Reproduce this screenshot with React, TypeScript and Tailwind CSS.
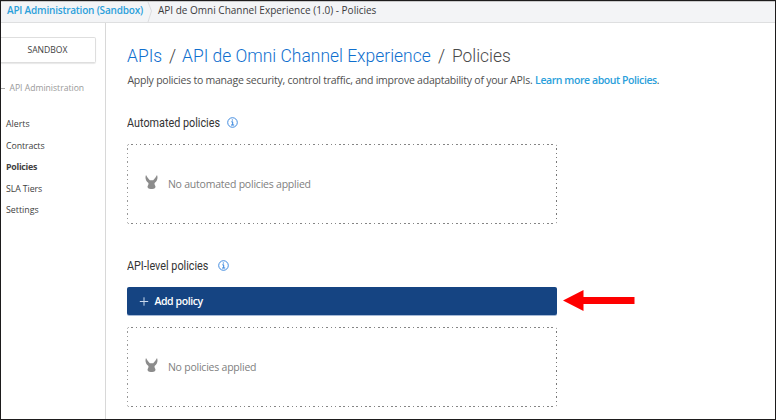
import React from 'react';

const din = "font-['Roboto','Liberation_Sans',sans-serif]";

function InfoIcon() {
  return (
    <svg className="-mt-[2px] h-[11px] w-[11px] shrink-0" viewBox="0 0 11 11" fill="none" stroke="#2f80dc">
      <circle cx="5.5" cy="5.5" r="4.8" strokeWidth="0.9" />
      <path d="M4.300 4.800h1.400v3.100M4 8h3.200M4.800 3h1.200" strokeWidth="1" />
    </svg>
  );
}

function MuleIcon() {
  return (
    <svg className="-mt-[2px] h-[14px] w-[13px] shrink-0" viewBox="0 0 13 14" fill="#8c8c8c">
      <path d="M1 0C-.2 3 .8 6 3.200 7.800c.6 1 .2 2-.4 2.900-.5.9-.3 1.900.4 2.500 1.300 1.100 5.300 1.100 6.600 0 .7-.6.9-1.600.4-2.500-.6-.9-1-1.900-.4-2.900C12.200 6 13.200 3 12 0 11 2 9.800 3.700 8.200 5.300c-.9-.2-2.500-.2-3.400 0C3.200 3.700 2 2 1 0Z" />
    </svg>
  );
}

function EmptyBox({ text }: { text: string }) {
  return (
    <div className="flex h-20 w-[430px] items-center rounded-[3px] bg-[repeating-linear-gradient(90deg,#858585_0_1.5px,transparent_1.5px_4.33px),repeating-linear-gradient(90deg,#858585_0_1.5px,transparent_1.5px_4.33px),repeating-linear-gradient(180deg,#999_0_1.5px,transparent_1.5px_4.33px),repeating-linear-gradient(180deg,#777_0_1.5px,transparent_1.5px_4.33px)] bg-[length:100%_1px,100%_1px,1px_100%,1px_100%] bg-[position:0_0,0_100%,0_0,100%_0] bg-no-repeat pl-[18px]">
      <div className="-mt-[3px] flex items-center">
        <MuleIcon />
        <span className="ml-[9.500px] mt-[2px] text-[10.5px] font-medium leading-4 tracking-[-0.22px] text-[#808080]">{text}</span>
      </div>
    </div>
  );
}

function SectionTitle({ text, width }: { text: string; width: string }) {
  return (
    <div className="flex h-5 items-center">
      <h2 className={`${din} ${width} origin-left scale-x-[0.865] whitespace-nowrap text-[12.5px] leading-5 text-[#333]`}>{text}</h2>
      <InfoIcon />
    </div>
  );
}

export default function App() {
  return (
    <div className="flex h-[420px] w-[776px] flex-col overflow-hidden border border-[#1d1b1c] bg-white font-['Open_Sans','Noto_Sans',sans-serif]">
      <header className="flex h-[22px] shrink-0 items-center whitespace-nowrap border-b border-t border-b-[#dedfe0] border-t-[#c9c9ca] bg-[#f3f4f6] pl-[6px] text-[10px]">
        <a className="-mt-1 w-[137px] font-semibold leading-4 tracking-[-0.2px] text-[#2ba0db]">API Administration (Sandbox)</a>
        <svg className="h-5 w-[14px]" viewBox="0 0 14 20" fill="none" stroke="#dcdde0"><path d="M4 0 7.500 9 4 20" /></svg>
        <span className="-mt-1 leading-4 text-[#3b3b3d]">API de Omni Channel Experience (1.0) - Policies</span>
      </header>
      <div className="flex min-h-0 flex-1">
        <aside className="w-[105px] shrink-0 border-r border-[#d8d8d8] text-[8.8px] text-[#414141]">
          <div className="mt-[14px] flex h-[26px] w-[95px] items-center justify-center rounded-r-[2px] border border-l-0 border-[#dedede] pr-[1px] text-[8.6px] shadow-[0_1px_1px_#e8e8e8]">SANDBOX</div>
          <div className="mt-[17px] flex h-[17px] items-center whitespace-nowrap text-[8.6px] text-[#999]">
            <span className="mr-[4.500px] h-px w-[4px] bg-[#aaa]" />API Administration
          </div>
          <nav className="mt-[17px] pl-[5px]">
            <div className="flex h-[21.500px] items-center">Alerts</div>
            <div className="flex h-[21.500px] items-center tracking-[-0.1px]">Contracts</div>
            <div className="flex h-[21.500px] items-center font-bold tracking-[-0.25px]">Policies</div>
            <div className="flex h-[21.500px] items-center tracking-[-0.1px]">SLA Tiers</div>
            <div className="flex h-[21.500px] items-center">Settings</div>
          </nav>
        </aside>
        <main className="flex min-w-0 flex-1 flex-col pl-[21.400px] pt-[20px]">
          <h1 className={`${din} flex h-6 shrink-0 items-center whitespace-nowrap text-[18px] font-light text-[#0f6fce]`}>
            <span className="w-[41.500px] origin-left scale-x-[0.97]">APIs</span><span className="w-[13px] text-[#444]">/</span>
            <span className="w-[256px] origin-left scale-x-[0.969]">API de Omni Channel Experience</span>
            <span className="w-[14px] text-[#444]">/</span><span className="origin-left scale-x-[0.965] text-[#4a4a4a]">Policies</span>
          </h1>
          <p className="mt-[5px] h-4 shrink-0 whitespace-nowrap text-[10.5px] leading-4 tracking-[-0.23px] text-[#505050]">
            Apply policies to manage security, control traffic, and improve adaptability of your APIs. <a className="font-semibold tracking-[-0.42px] text-[#2ba0db]">Learn more about Policies</a>.
          </p>
          <div className="mt-[25px]"><SectionTitle text="Automated policies" width="w-[100px]" /></div>
          <div className="mt-[11px]"><EmptyBox text="No automated policies applied" /></div>
          <div className="mt-[32px]"><SectionTitle text="API-level policies" width="w-[91px]" /></div>
          <div className="mt-[11px] flex items-center">
            <button className="flex h-7 w-[430px] items-center rounded-[2px] bg-[#154482] pl-[12px] text-[10.5px] font-semibold tracking-[-0.4px] text-white shadow-[0_1px_0_#a5b9d6]">
              <svg className="mr-[5px] h-[10px] w-[10px]" viewBox="0 0 10 10" stroke="#c9d8ec"><path d="M.8 5.500h8.400M5 1.300v8.400" /></svg>
              <span className="mt-[1px]">Add policy</span>
            </button>
            <svg className="ml-[6px] h-[22px] w-[72px]" viewBox="0 0 72 22" fill="#fe0000"><path d="M0 10.500 20.500 0v7H71.500v7H20.500v7Z" /></svg>
          </div>
          <div className="mt-[12px]"><EmptyBox text="No policies applied" /></div>
        </main>
      </div>
    </div>
  );
}
